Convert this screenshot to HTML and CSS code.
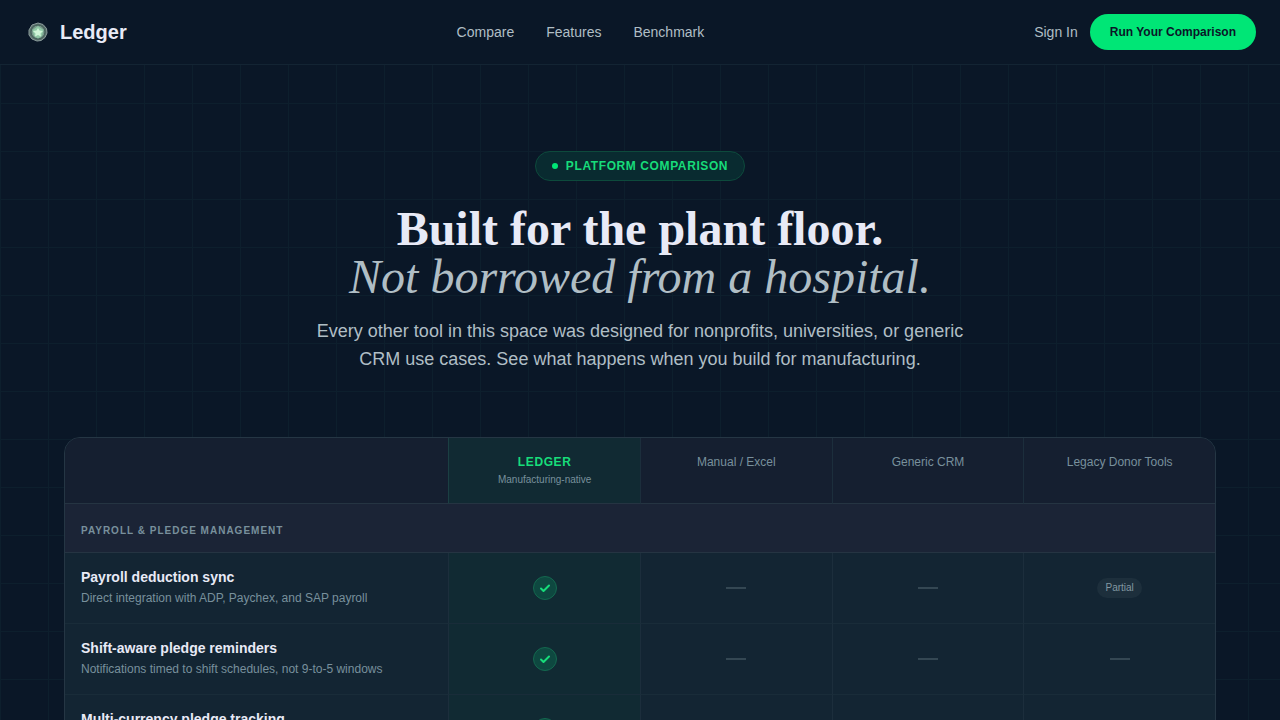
FILE: index.html
```
<!DOCTYPE html>
<html lang="en">
<head>
  <meta charset="UTF-8" />
  <meta name="viewport" content="width=device-width, initial-scale=1" />
  <title>Ledger - Platform Comparison</title>
  <link rel="stylesheet" href="styles.css">
</head>
<body>
  <header class="site-header">
    <a class="brand" href="#">
      <svg class="brand-logo" viewBox="0 0 28 28" aria-hidden="true">
        <path d="M14 5l5 1.5 3.5 4L23 15l-2 4.500-4 3L13 23l-5-2-3-4v-5l3-5z" fill="#5b706b" stroke="#8b9c9c" stroke-width="1" stroke-linejoin="round" />
        <circle cx="14" cy="14" r="7" fill="#77988a" stroke="#3f5a55" stroke-width="1" />
        <path d="M14 8l5.500 4-1.500 6-4 2.500-4-2.500-1.500-6z" fill="#91c9a6" />
        <path d="M14 10l1.500 2.500 3.500.5-2.500 2.500.5 3-3-1.500-3 1.500.5-3L9 13l3.500-.5z" fill="#d0f5d8" />
      </svg>
      <span>Ledger</span>
    </a>
    <nav class="nav-links">
      <a href="#compare">Compare</a>
      <a href="#features">Features</a>
      <a href="#benchmark">Benchmark</a>
    </nav>
    <div class="nav-actions">
      <a class="sign-in" href="#signin">Sign In</a>
      <button class="cta" type="button">Run Your Comparison</button>
    </div>
  </header>

  <main class="page">
    <section class="hero">
      <div class="badge"><span class="badge-dot"></span>PLATFORM COMPARISON</div>
      <h1>Built for the plant floor.<br><em>Not borrowed from a hospital.</em></h1>
      <p>Every other tool in this space was designed for nonprofits, universities, or generic CRM use cases. See what happens when you build for manufacturing.</p>
    </section>

    <section class="table-wrap" id="compare">
      <table class="compare-table">
        <colgroup>
          <col class="col-feature">
          <col span="4">
        </colgroup>
        <thead>
          <tr>
            <td></td>
            <th scope="col" class="ledger"><span class="ledger-name">LEDGER</span><span class="ledger-sub">Manufacturing-native</span></th>
            <th scope="col">Manual / Excel</th>
            <th scope="col">Generic CRM</th>
            <th scope="col">Legacy Donor Tools</th>
          </tr>
        </thead>
        <tbody>
          <tr class="group">
            <th colspan="5" scope="colgroup">PAYROLL &amp; PLEDGE MANAGEMENT</th>
          </tr>
          <tr>
            <th scope="row"><span class="feature-name">Payroll deduction sync</span><span class="feature-desc">Direct integration with ADP, Paychex, and SAP payroll</span></th>
            <td class="ledger"><span class="check"><svg viewBox="0 0 12 12" role="img" aria-label="Yes"><path d="M2 6.5l2.5 2.5L10 3.5" /></svg></span></td>
            <td><span class="dash"></span></td>
            <td><span class="dash"></span></td>
            <td><span class="partial">Partial</span></td>
          </tr>
          <tr>
            <th scope="row"><span class="feature-name">Shift-aware pledge reminders</span><span class="feature-desc">Notifications timed to shift schedules, not 9-to-5 windows</span></th>
            <td class="ledger"><span class="check"><svg viewBox="0 0 12 12" role="img" aria-label="Yes"><path d="M2 6.5l2.5 2.5L10 3.5" /></svg></span></td>
            <td><span class="dash"></span></td>
            <td><span class="dash"></span></td>
            <td><span class="dash"></span></td>
          </tr>
          <tr>
            <th scope="row"><span class="feature-name">Multi-currency pledge tracking</span></th>
            <td class="ledger"><span class="check"><svg viewBox="0 0 12 12" role="img" aria-label="Yes"><path d="M2 6.5l2.5 2.5L10 3.5" /></svg></span></td>
            <td><span class="dash"></span></td>
            <td><span class="dash"></span></td>
            <td><span class="dash"></span></td>
          </tr>
        </tbody>
      </table>
    </section>
  </main>
</body>
</html>
```
FILE: styles.css
```
* {
  box-sizing: border-box;
}

body {
  margin: 0;
  background-color: #0a1727;
  color: #e8eaf6;
  font-family: "Liberation Sans", Arial, sans-serif;
}

a {
  color: inherit;
  text-decoration: none;
}

/* header */
.site-header {
  display: flex;
  justify-content: space-between;
  align-items: center;
  height: 65px;
  padding: 0 24px;
  border-bottom: 1px solid #132433;
}

.brand {
  display: flex;
  align-items: center;
  gap: 8px;
  font-size: 20px;
  font-weight: bold;
}

.brand-logo {
  width: 28px;
  height: 28px;
}

.nav-links {
  display: flex;
  gap: 32px;
}

.nav-links,
.sign-in {
  font-size: 14px;
  color: #b0bec5;
}

.nav-actions {
  display: flex;
  align-items: center;
  gap: 12px;
}

.cta {
  height: 36px;
  padding: 0 20px;
  border: none;
  border-radius: 18px;
  background-color: #00e676;
  color: #0a1628;
  font-family: inherit;
  font-size: 12px;
  font-weight: bold;
  cursor: pointer;
}

.cta:hover {
  background-color: #1af088;
}

/* 48px grid behind the content */
.page {
  padding: 86px 64px 64px;
  background-image:
    linear-gradient(to right, #0d1f2d 1px, transparent 1px),
    linear-gradient(to bottom, #0d1f2d 1px, transparent 1px);
  background-size: 48px 48px;
  background-position: 0 -10px;
}

.hero {
  display: flex;
  flex-direction: column;
  align-items: center;
  text-align: center;
}

.badge {
  display: flex;
  align-items: center;
  gap: 8px;
  height: 30px;
  padding: 0 16px;
  border: 1px solid #0d4a3c;
  border-radius: 15px;
  background-color: #092b30;
  color: #17dc7a;
  font-size: 12px;
  font-weight: bold;
  letter-spacing: 0.6px;
}

.badge-dot {
  width: 6px;
  height: 6px;
  border-radius: 50%;
  background-color: #00e676;
}

h1 {
  margin: 24px 0 16px;
  font-family: "Liberation Serif", "Times New Roman", serif;
  font-size: 48px;
  line-height: 48px;
}

h1 em {
  font-weight: normal;
  color: #b0bec5;
}

.hero p {
  max-width: 672px;
  margin: 0 0 64px;
  font-size: 18px;
  line-height: 28px;
  color: #b0bec5;
}

/* comparison table */
.table-wrap {
  overflow: hidden;
  border: 1px solid #253644;
  border-radius: 16px;
  background-color: #132533;
}

.compare-table {
  width: 100%;
  table-layout: fixed;
  border-collapse: separate;
  border-spacing: 0;
}

.col-feature {
  width: 33.3333%;
}

.compare-table th,
.compare-table td {
  height: 71px;
  padding: 16px;
  border-bottom: 1px solid #192c39;
  text-align: center;
}

.compare-table th + th,
.compare-table td + td,
.compare-table th + td,
.compare-table td + th {
  border-left: 1px solid #1c2e3c;
}

.compare-table thead th,
.compare-table thead td {
  height: 66px;
  padding-bottom: 12px;
  background-color: #151f30;
  border-bottom-color: #253442;
  vertical-align: top;
  font-size: 12px;
  font-weight: normal;
  line-height: 16px;
  color: #78909c;
}

.compare-table .ledger,
.compare-table thead .ledger {
  background-color: #112a33;
}

.compare-table thead .ledger {
  border-left-color: #1b3f43;
}

.ledger-name,
.ledger-sub,
.feature-name,
.feature-desc {
  display: block;
}

.ledger-name {
  color: #17dc7a;
  font-weight: bold;
  letter-spacing: 0.6px;
}

.ledger-sub {
  margin-top: 2px;
  font-size: 10px;
  color: #78909c;
}

.compare-table .group th {
  height: 49px;
  padding: 18px 16px 12px;
  background-color: #1b2436;
  border-bottom-color: #253442;
  text-align: left;
  font-size: 10px;
  letter-spacing: 1px;
  line-height: 16px;
  color: #78909c;
}

.compare-table th[scope="row"] {
  text-align: left;
  vertical-align: top;
  font-weight: normal;
}

.feature-name {
  font-size: 14px;
  font-weight: bold;
  line-height: 17px;
}

.feature-desc {
  margin-top: 4px;
  font-size: 12px;
  line-height: 16px;
  color: #78909c;
}

.check {
  display: flex;
  justify-content: center;
  align-items: center;
  width: 24px;
  height: 24px;
  margin: 0 auto;
  border: 1px solid #14684f;
  border-radius: 50%;
  background-color: #0e4840;
}

.check svg {
  width: 12px;
  height: 12px;
  fill: none;
  stroke: #17dc7a;
  stroke-width: 2;
  stroke-linecap: round;
  stroke-linejoin: round;
}

.dash {
  display: block;
  width: 20px;
  height: 2px;
  margin: 0 auto;
  background-color: #344753;
}

.partial {
  display: inline-block;
  padding: 0 8px;
  border-radius: 10px;
  background-color: #1d2f3c;
  color: #8297a2;
  font-size: 10px;
  line-height: 20px;
  vertical-align: middle;
}
```
